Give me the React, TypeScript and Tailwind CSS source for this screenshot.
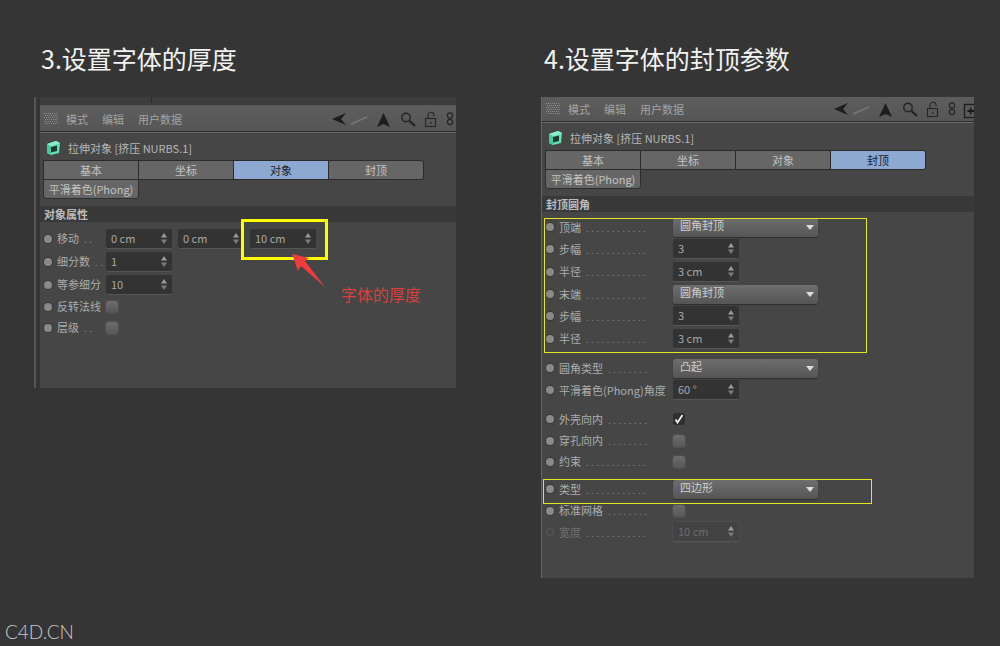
import React from "react";

const FONT = "[font-family:'Noto_Sans_CJK_SC','Noto_Sans',sans-serif]";

function Spin() {
  return (
    <svg width="6" height="11" viewBox="0 0 6 11" className="shrink-0">
      <polygon points="3,0 6,4.5 0,4.5" fill="#9c9c9c" />
      <polygon points="0,6.5 6,6.5 3,11" fill="#7c7c7c" />
    </svg>
  );
}

function NumInput({ value, faded }: { value: string; faded?: boolean }) {
  return (
    <div
      className={
        faded
          ? "flex h-[20px] w-[66px] items-center justify-between rounded-[2px] border-b border-[#555] bg-[#434343] pl-[5px] pr-[5px] text-[11px] text-[#6c6c6c] shadow-[0_0_0_1px_#4d4d4d]"
          : "flex h-[20px] w-[66px] items-center justify-between rounded-[2px] border-b border-[#565656] bg-[#333333] pl-[5px] pr-[5px] text-[11px] text-[#a8a8a8]"
      }
    >
      <span>{value}</span>
      <Spin />
    </div>
  );
}

function Drop({ value }: { value: string }) {
  return (
    <div className="flex h-[19px] w-[145px] items-center justify-between rounded-[3px] bg-gradient-to-b from-[#6e6e6e] to-[#555555] pl-[7px] pr-[3px] text-[11px] leading-none text-[#cfcfcf] shadow-[0_1px_1px_#2e2e2e]">
      <span className="-translate-y-[2px]">{value}</span>
      <svg width="8" height="5" viewBox="0 0 8 5" className="mr-[1px]">
        <polygon points="0,0 8,0 4,5" fill="#dddddd" />
      </svg>
    </div>
  );
}

function Check({ on }: { on?: boolean }) {
  return (
    <div
      className={
        on
          ? "flex h-[12px] w-[12px] items-center justify-center rounded-[3px] bg-[#2e2e2e]"
          : "h-[12px] w-[12px] rounded-[3px] bg-gradient-to-b from-[#6c6c6c] to-[#575757] shadow-[0_0_0_1px_#4f4f4f]"
      }
    >
      {on && (
        <svg width="10" height="10" viewBox="0 0 10 10">
          <path d="M1.5 5.5 L3.5 8.5 L8.5 1" fill="none" stroke="#f0f0f0" strokeWidth="1.8" />
        </svg>
      )}
    </div>
  );
}

function Row({
  label,
  dots,
  h,
  w,
  faded,
  children,
}: {
  label: string;
  dots?: string;
  h: string;
  w: string;
  faded?: boolean;
  children: React.ReactNode;
}) {
  return (
    <div className={`flex items-center pl-[4px] ${h}`}>
      <div
        className={
          faded
            ? "h-[8px] w-[8px] shrink-0 rounded-full border border-[#5c5c5c] bg-[#464646]"
            : "h-[8px] w-[8px] shrink-0 rounded-full bg-[#8a8a8a] shadow-[0_0_0_1px_#383838]"
        }
      />
      <div
        className={`ml-[5px] flex shrink-0 items-baseline overflow-hidden whitespace-nowrap text-[11px] ${w} ${
          faded ? "text-[#6f6f6f]" : "text-[#adadad]"
        }`}
      >
        <span>{label}</span>
        {dots && <span className="ml-[5px] text-[10px] tracking-[2.4px] text-[#858585]">{dots}</span>}
      </div>
      <div className="flex items-center gap-[6px]">{children}</div>
    </div>
  );
}

function DotGrid() {
  const cells: React.ReactNode[] = [];
  for (let y = 0; y < 6; y++)
    for (let x = 0; x < 7; x++)
      cells.push(<rect key={`${x}-${y}`} x={x * 2 + (y % 2)} y={y * 2} width="1" height="1" fill="#8d8d8d" />);
  return (
    <svg width="14" height="12" viewBox="0 0 14 12" className="shrink-0">
      {cells}
    </svg>
  );
}

function ToolIcons() {
  return (
    <svg width="141" height="24" viewBox="0 0 141 24" className="shrink-0">
      <polygon points="0,12 14,6 9,12 14,18" fill="#1d1d1d" />
      <path d="M19 17 L35 10" stroke="#787878" strokeWidth="1.5" />
      <polygon points="51.5,6 58,20 51.5,17 45,20" fill="#1d1d1d" />
      <circle cx="74" cy="10.5" r="4.2" fill="none" stroke="#222" strokeWidth="1.4" />
      <path d="M77.5 14 L83 19" stroke="#222" strokeWidth="2.2" />
      <rect x="93.5" y="11.5" width="10" height="8" fill="none" stroke="#262626" strokeWidth="1.1" />
      <path d="M96 11 V8.5 A3 3 0 0 1 102 8 V9" fill="none" stroke="#262626" strokeWidth="1.1" />
      <rect x="98" y="15" width="1.4" height="1.6" fill="#262626" />
      <circle cx="118" cy="8.5" r="2.6" fill="none" stroke="#262626" strokeWidth="1.2" />
      <circle cx="118" cy="15" r="2.6" fill="none" stroke="#262626" strokeWidth="1.2" />
      <rect x="130.5" y="7.5" width="12" height="13" fill="#5a5a5a" stroke="#1f1f1f" strokeWidth="1.4" />
      <path d="M133.5 14 H140 M136.7 10.8 V17.2" stroke="#1a1a1a" strokeWidth="1.8" />
    </svg>
  );
}

function Cube() {
  return (
    <svg width="15" height="16" viewBox="0 0 15 16" className="shrink-0">
      <polygon points="1,4 10,1 14,3 13,13 5,15 1,13" fill="#62e2b2" />
      <polygon points="1,4 10,1 14,3 5,6" fill="#8cf0cc" />
      <polygon points="5,7 11,5.5 11,11 5,12.5" fill="#1f3a33" />
      <polygon points="1,4 5,6 5,15 1,13" fill="#49c99a" />
    </svg>
  );
}

function Tab({ label, active, cls }: { label: string; active?: boolean; cls: string }) {
  return (
    <div
      className={`flex h-[20px] items-center justify-center border border-[#2b2b2b] text-[11px] ${cls} ${
        active ? "bg-[#8ea9d1] text-[#171c26]" : "bg-[#666666] text-[#c2c2c2]"
      }`}
    >
      {label}
    </div>
  );
}

function Head({ section, active }: { section: string; active: number }) {
  return (
    <>
      <div className="flex h-[25px] w-[433px] items-center border-b border-[#2b2b2b] bg-gradient-to-b from-[#5d5d5d] to-[#565656] pl-[4px] shadow-[0_1px_0_#6a6a6a]">
        <DotGrid />
        <div className="ml-[8px] flex w-[274px] gap-[14px] text-[11px] text-[#a3a3a3]">
          <span>模式</span>
          <span>编辑</span>
          <span>用户数据</span>
        </div>
        <ToolIcons />
      </div>
      <div className="flex h-[28px] items-center pl-[6px] pt-[4px] text-[11px] text-[#b8b8b8]">
        <Cube />
        <span className="ml-[7px]">拉伸对象 [挤压 NURBS.1]</span>
      </div>
      <div className="pl-[3px]">
        <div className="flex w-[381px]">
          <Tab label="基本" cls="w-[96px]" active={active === 0} />
          <Tab label="坐标" cls="-ml-px w-[96px]" active={active === 1} />
          <Tab label="对象" cls="-ml-px w-[96px]" active={active === 2} />
          <Tab label="封顶" cls="-ml-px w-[96px] rounded-tr-[3px] rounded-br-[3px]" active={active === 3} />
        </div>
        <div className="-mt-px flex h-[20px] w-[96px] items-center justify-center rounded-b-[3px] border border-[#2f2f2f] bg-[#666666] text-[11px] text-[#c2c2c2]">
          平滑着色(Phong)
        </div>
      </div>
      <div className="mt-[7px] flex h-[16px] items-center bg-[#393939] pl-[4px] text-[11px] font-bold text-[#bdbdbd]">
        {section}
      </div>
    </>
  );
}

const LW = "w-[49px]";
const RW = "w-[114px]";
const D = "............";

export default function App() {
  return (
    <div className={`flex h-[646px] w-[1000px] flex-col overflow-hidden bg-[#353535] ${FONT}`}>
      <div className="flex h-[620px]">
        {/* left column */}
        <div className="w-[507px] pl-[34px] pt-[41px]">
          <div className="h-[34px] pl-[7px] text-[25px] leading-[34px] text-[#f2f2f2]">3.设置字体的厚度</div>
          <div className="mt-[22px] flex">
            <div className="mt-0 h-[291px] w-[6px] border-l-2 border-[#565656]" />
            <div className="w-[416px]">
              <div className="h-[10px] border-b-2 border-t-0 border-[#5a5a5a] bg-[#3c3c3c]">
                <div className="h-[6px] w-[112px] border-r border-[#2c2c2c]" />
              </div>
              <div className="relative h-[281px] w-[416px] overflow-hidden bg-[#464646]">
                <Head section="对象属性" active={2} />
                <div className="pt-[5px]">
                  <Row label="移动" dots=".." h="h-[23px]" w={LW}>
                    <NumInput value="0 cm" />
                    <NumInput value="0 cm" />
                    <NumInput value="10 cm" />
                  </Row>
                  <Row label="细分数" dots=".." h="h-[23px]" w={LW}>
                    <NumInput value="1" />
                  </Row>
                  <Row label="等参细分" h="h-[23px]" w={LW}>
                    <NumInput value="10" />
                  </Row>
                  <Row label="反转法线" h="h-[21px]" w={LW}>
                    <Check />
                  </Row>
                  <Row label="层级" dots=".." h="h-[21px]" w={LW}>
                    <Check />
                  </Row>
                </div>
                <div className="absolute left-[201px] top-[112px] h-[41px] w-[87px] border-[3px] border-[#ffff00]" />
                <svg width="40" height="40" viewBox="0 0 40 40" className="absolute left-[250px] top-[145px]">
                  <polygon points="2,2 19,6 15,9 35,35 11,14 8,19" fill="#f03c3c" />
                </svg>
                <div className="absolute left-[301px] top-[176px] text-[16px] leading-[22px] text-[#d9403e]">字体的厚度</div>
              </div>
            </div>
          </div>
        </div>
        {/* right column */}
        <div className="pl-[34px] pt-[41px]">
          <div className="h-[34px] pl-[3px] text-[25px] leading-[34px] text-[#f2f2f2]">4.设置字体的封顶参数</div>
          <div className="relative mt-[22px] h-[481px] w-[433px] overflow-hidden border-l border-[#666666] bg-[#464646]">
            <Head section="封顶圆角" active={3} />
            <div className="pt-[4px]">
              <Row label="顶端" dots={D} h="h-[22px]" w={RW}>
                <Drop value="圆角封顶" />
              </Row>
              <Row label="步幅" dots={D} h="h-[22px]" w={RW}>
                <NumInput value="3" />
              </Row>
              <Row label="半径" dots={D} h="h-[23px]" w={RW}>
                <NumInput value="3 cm" />
              </Row>
              <Row label="末端" dots={D} h="h-[22px]" w={RW}>
                <Drop value="圆角封顶" />
              </Row>
              <Row label="步幅" dots={D} h="h-[22px]" w={RW}>
                <NumInput value="3" />
              </Row>
              <Row label="半径" dots={D} h="h-[23px]" w={RW}>
                <NumInput value="3 cm" />
              </Row>
              <div className="h-[7px]" />
              <Row label="圆角类型" dots="........" h="h-[22px]" w={RW}>
                <Drop value="凸起" />
              </Row>
              <Row label="平滑着色(Phong)角度" h="h-[22px]" w={RW}>
                <NumInput value="60 °" />
              </Row>
              <div className="h-[7px]" />
              <Row label="外壳向内" dots="........" h="h-[22px]" w={RW}>
                <Check on />
              </Row>
              <Row label="穿孔向内" dots="........" h="h-[21px]" w={RW}>
                <Check />
              </Row>
              <Row label="约束" dots={D} h="h-[21px]" w={RW}>
                <Check />
              </Row>
              <div className="h-[6px]" />
              <Row label="类型" dots={D} h="h-[22px]" w={RW}>
                <Drop value="四边形" />
              </Row>
              <Row label="标准网格" dots="........" h="h-[21px]" w={RW}>
                <Check />
              </Row>
              <Row label="宽度" dots={D} h="h-[22px]" w={RW} faded>
                <NumInput value="10 cm" faded />
              </Row>
            </div>
            <div className="absolute left-[2px] top-[121px] h-[135px] w-[323px] border border-[#e6e61e]" />
            <div className="absolute left-[1px] top-[382px] h-[25px] w-[329px] border border-[#e6e61e]" />
          </div>
        </div>
      </div>
      <div className="pl-[5px] text-[19px] font-light leading-[24px] text-[#c9c9c9] [font-family:'Lato',sans-serif]">C4D.CN</div>
    </div>
  );
}
